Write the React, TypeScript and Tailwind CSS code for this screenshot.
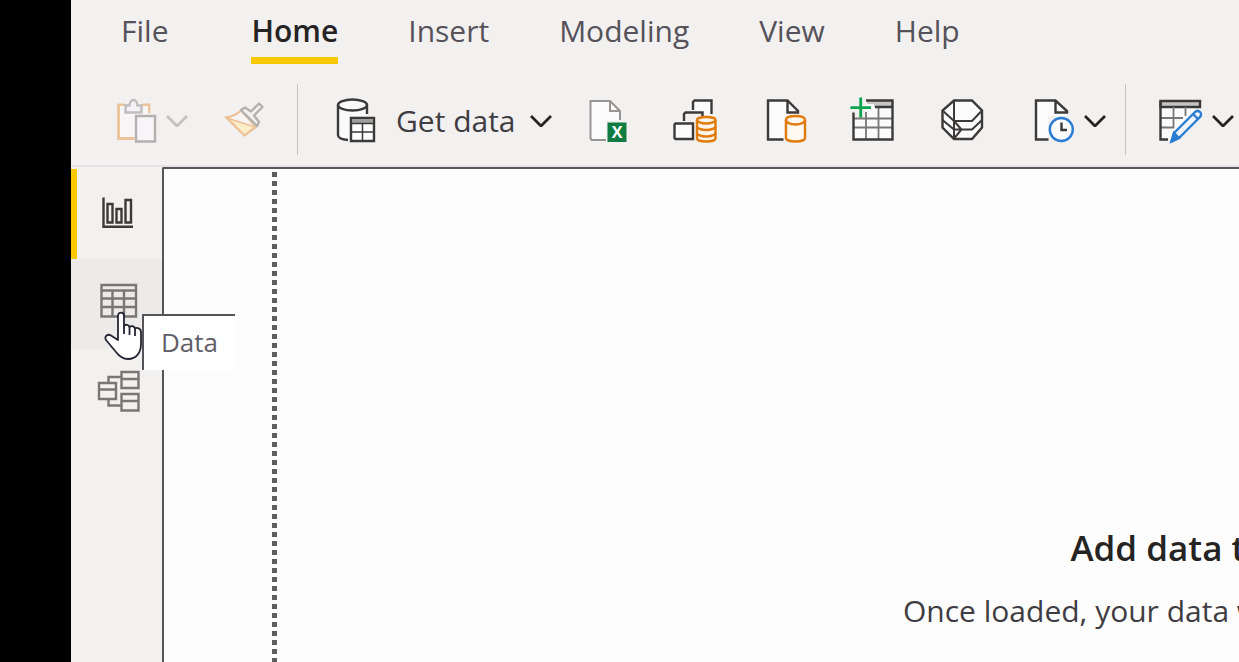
import type { ReactNode } from "react";
import clsx from "clsx";

const INK = "#3b3a39";
const ORANGE = "#e07b0c";
const BLUE = "#2b7cd3";

const tabs = ["File", "Home", "Insert", "Modeling", "View", "Help"];

function Icon({ children, color = INK }: { children: ReactNode; color?: string }) {
  return (
    <svg viewBox="0 0 48 48" fill="none" stroke={color} strokeWidth="2.4" className="size-12 shrink-0" aria-hidden="true">
      {children}
    </svg>
  );
}

function Chevron({ color = "#252423" }: { color?: string }) {
  return (
    <svg viewBox="0 0 22 14" fill="none" stroke={color} strokeWidth="2.8" className="h-[14px] w-[22px] shrink-0" aria-hidden="true">
      <path d="M1 3l10 10L21 3" />
    </svg>
  );
}

function Divider() {
  return <div className="h-[71px] w-px shrink-0 bg-[#c8c6c4]" />;
}

function PasteIcon() {
  return (
    <Icon color="#b3b0b0">
      <path d="M9 9H2.500v33.500h16M26 9h7v8" stroke="#edc39a" strokeWidth="2.800" />
      <path d="M4 10h28v9H19v22H4z" fill="#f8f5f7" stroke="none" />
      <path d="M9.500 16.500V9.500h4C14 5.500 15.500 4 17.500 4s3.500 1.500 4 5.500h4v7z" fill="#f5f2f5" stroke="#c0bdbe" />
      <path d="M20 20h19v25.500H20z" fill="#f8f5f8" />
    </Icon>
  );
}

function BrushIcon() {
  return (
    <Icon color="#b3b0b0">
      <path d="M4 21.500c6-1 11-3 15-7l15 16.500-11.500 8.500z" fill="#f8f4f4" stroke="#eec096" strokeWidth="2" />
      <path d="M5 22l28 9-10.500 8.500z" fill="#fdecc8" stroke="#eec096" strokeWidth="1.800" strokeLinejoin="round" />
      <path d="M19 14l4-2.500 6 4L37 7.500 40.500 11 32 19.500l5 6.500-2 4z" fill="#f5f2f2" strokeLinejoin="round" />
    </Icon>
  );
}

function GetDataIcon() {
  return (
    <Icon>
      <path d="M2 9v30c0 3 4 5 11 5.500V20h19V9" fill="#faf9fb" stroke="none" />
      <ellipse cx="16.500" cy="9" rx="14.500" ry="5.500" fill="#faf9fb" />
      <path d="M2 9v30c0 2.500 4 4.500 10 5M31 9v9" />
      <path d="M15 22h23v23H15z" fill="#fff" />
      <path d="M16 23h21v4H16z" fill="#a19f9d" stroke="none" />
      <path d="M15 27.500h23M15 36h23M26.500 27v18" strokeWidth="1.500" />
    </Icon>
  );
}

function ExcelIcon() {
  return (
    <Icon color="#979593">
      <path d="M23 44H9l-1.500-1.500V5H27l10 10v10H23z" fill="#fcfbfc" stroke="none" />
      <path d="M23 44H9l-1.500-1.500V5H27l10 10v9M27 5v10h10" strokeWidth="2" />
      <path d="M24.500 26.500h19V46h-19z" fill="#107c41" stroke="none" />
      <text x="34" y="42" textAnchor="middle" fontSize="16" fontWeight="700" fill="#fff" stroke="none" fontFamily="Open Sans, sans-serif">X</text>
    </Icon>
  );
}

function DataflowIcon() {
  return (
    <Icon>
      <path d="M21 14V6l1.500-1.500h17V19h-9z" fill="#fcfbfc" stroke="none" />
      <path d="M21 14V6l1.500-1.500h17V18" />
      <path d="M12 25v-7l1.500-1.500h17V20" />
      <path d="M3.500 27.500H21V43H3.500L2.500 42V28.500z" fill="#fcfbfc" />
      <path d="M25 24v18.500c0 1.700 4 3 9.200 3s9.300-1.300 9.300-3V24c0-1.700-4-3-9.300-3S25 22.300 25 24z" fill="#fff5ea" stroke={ORANGE} />
      <path d="M25 24c0 1.700 4 3.500 9.200 3.500s9.300-1.800 9.300-3.500M25 30.500c0 1.700 4 3.500 9.200 3.500s9.300-1.800 9.300-3.500M25 37c0 1.700 4 3.500 9.200 3.500s9.300-1.800 9.300-3.500" stroke={ORANGE} />
    </Icon>
  );
}

function SqlIcon() {
  return (
    <Icon>
      <path d="M23 43.500H7V4.500h19l11 12V20H23z" fill="#fcfbfc" stroke="none" />
      <path d="M22.500 43.500H7V4.500h19.500L37 15v1.500H26.500v-12" />
      <path d="M25 24v18c0 2 4 3.500 9.500 3.500S44 44 44 42V24c0-2.500-4-4-9.500-4S25 21.500 25 24z" fill="#fff9f1" stroke={ORANGE} />
      <path d="M25 24c0 2.500 4 4.500 9.500 4.500S44 26.500 44 24" stroke={ORANGE} />
    </Icon>
  );
}

function EnterDataIcon() {
  return (
    <Icon>
      <path d="M16 4.500h26.500v39H3V22h13z" fill="#fcfbfc" stroke="none" />
      <path d="M17 5h25v6H24V8h-7z" fill="#c8c6c4" stroke="none" />
      <path d="M3.500 22.500H42M3.500 31.500H42M16 16v27M28.500 11v32" stroke="#797775" strokeWidth="1.800" />
      <path d="M16 4.500h26.500v39H3.500V16.500M25 11h17" />
      <path d="M10.700 1.500v20M.5 11.700h20.500" stroke="#10a34f" strokeWidth="2.800" />
    </Icon>
  );
}

function DataverseIcon() {
  return (
    <Icon>
      <path d="M15 4.500h18l10 10v17l-10 11.500H15L3.500 31.500v-17z" fill="#fcfbfc" />
      <path d="M15 4.500V43M3.500 14.500L15 25h18l10-10.500M3.500 24L15 33.500h18L43 24M15 25l7.500 8.500L15 42.500" strokeWidth="2" />
    </Icon>
  );
}

function RecentIcon() {
  return (
    <Icon>
      <path d="M20 43.500H8V4.500h19l12 12V20H20z" fill="#fcfbfc" stroke="none" />
      <path d="M20.500 43.500H8V4.500h19.500L39 15v1.500H27.500v-12" />
      <circle cx="33.300" cy="33.500" r="11.500" fill="#fcfbfc" stroke={BLUE} />
      <path d="M33.500 26.500V34H39" />
    </Icon>
  );
}

function TransformIcon() {
  return (
    <Icon>
      <path d="M2 4.500h40v8L12 43.500H2z" fill="#fcfbfc" stroke="none" />
      <path d="M2.500 5h39.500v6H2.500z" fill="#c8c6c4" />
      <path d="M3 22h22M3 31.500h13M15.500 11v21M27.500 11v9" stroke="#797775" strokeWidth="1.800" />
      <path d="M2.500 5v38.500H10" />
      <path d="M13.500 45.500l2.500-8.500 20.500-20.500c2-2 4-2 5.500-.5s1.500 3.500-.5 5.500L21 42z" fill="#eef5fc" stroke={BLUE} strokeLinejoin="round" />
      <path d="M13.500 45.500l2.500-8.500 5 5z" fill={BLUE} stroke={BLUE} />
      <path d="M35 18l5.500 5.500" stroke={BLUE} />
    </Icon>
  );
}

function ReportIcon() {
  return (
    <Icon>
      <path d="M8.500 7.500v29.300H38M12.500 14h5v18.500h-5zM21.500 19h5v13.500h-5zM30.500 10h5.500v22.500h-5.500z" />
    </Icon>
  );
}

function TableIcon() {
  return (
    <Icon color="#797775">
      <path d="M6.500 5h34.500v31.500H6.500zM6.500 10.500H41M6.500 18.500H41M6.500 27H41M17.500 10v26M29 10v26" />
    </Icon>
  );
}

function ModelIcon() {
  return (
    <Icon color="#797775">
      <path d="M26.500 2h17v16h-17zM26.500 9h17M26.500 24h17v16.500h-17zM26.500 31h17M4 13h17v16H4zM4 19.500h17M13.500 13V7h13M13.500 29v6.500h13" />
    </Icon>
  );
}

const sources = [
  { label: "Excel workbook", icon: ExcelIcon },
  { label: "Dataflows", icon: DataflowIcon },
  { label: "SQL Server", icon: SqlIcon },
  { label: "Enter data", icon: EnterDataIcon },
  { label: "Dataverse", icon: DataverseIcon },
];

const views = [
  { label: "Report", icon: ReportIcon },
  { label: "Data", icon: TableIcon },
  { label: "Model", icon: ModelIcon },
];

function HandCursor() {
  return (
    <svg viewBox="0 0 40 50" className="absolute left-[33px] top-[52px] z-20 h-[50px] w-10" aria-hidden="true">
      <path
        d="M14 29V5c0-4.500 6-4.500 6 0v10c1-2 5-1.500 5.500 1 1.500-1.500 5-1 5.500 1.500 2-1.500 6 0 6 3.500v12c0 9-5 15-13 15-6 0-9-3-12-7L2 29c-2-4 2-6.500 5-4.500z"
        fill="#fff"
        stroke="#252433"
        strokeWidth="1.800"
        strokeLinejoin="round"
      />
      <path d="M20 14v9M25.500 16v8M31 17.500V25" fill="none" stroke="#252433" strokeWidth="1.800" />
    </svg>
  );
}

export default function App() {
  return (
    <div className="flex h-screen overflow-hidden whitespace-nowrap bg-[#f3f0f0] font-['Open_Sans',sans-serif] text-[#3f3d42]">
      <div className="w-[71px] shrink-0 bg-black" />

      <div className="flex min-w-0 flex-1 flex-col">
        {/* Ribbon */}
        <header className="shrink-0 border-b-2 border-[#e6e3e4] pb-[10px]">
          <nav className="flex gap-[70px] pl-[50px] pt-[10px] text-[30px] leading-[42px]">
            {tabs.map((tab) => (
              <a
                key={tab}
                href="#"
                className={clsx(
                  "border-b-[7px] pb-[5px]",
                  tab === "Home" ? "border-[#f8c900] font-semibold text-[#252423]" : "border-transparent text-[#55525a]",
                  tab === "File" && "mr-[13px]"
                )}
              >
                {tab}
              </a>
            ))}
          </nav>

          <div className="mt-5 flex items-center">
            <button aria-label="Paste" className="ml-[45px] flex items-center gap-[2px]">
              <PasteIcon />
              <Chevron color="#c4c1c1" />
            </button>
            <button aria-label="Format painter" className="ml-[34px] mr-[27px]">
              <BrushIcon />
            </button>
            <Divider />
            <button className="ml-[38px] flex items-center gap-3 text-[30px] leading-[42px]">
              <GetDataIcon />
              <span className="pr-[2px] pt-[3px]">Get data</span>
              <Chevron />
            </button>
            <div className="ml-[31px] flex gap-[41px]">
              {sources.map(({ label, icon: SourceIcon }) => (
                <button key={label} aria-label={label}>
                  <SourceIcon />
                </button>
              ))}
              <button aria-label="Recent sources" className="flex items-center gap-2">
                <RecentIcon />
                <Chevron />
              </button>
            </div>
            <div className="ml-[19px]">
              <Divider />
            </div>
            <button aria-label="Transform data" className="ml-8 flex items-center gap-[6px]">
              <TransformIcon />
              <Chevron />
            </button>
          </div>
        </header>

        <div className="flex min-h-0 flex-1">
          {/* View switcher */}
          <nav className="w-[91px] shrink-0 pt-[2px]">
            {views.map(({ label, icon: ViewIcon }) => (
              <div key={label} className="relative">
                <button
                  aria-label={label}
                  className={clsx(
                    "flex h-[90px] w-full items-center justify-center border-l-[6px] pr-[2px]",
                    label === "Report" ? "border-[#f8c900]" : "border-transparent",
                    label === "Data" && "bg-[#edeaea]"
                  )}
                >
                  <ViewIcon />
                </button>
                {label === "Data" && (
                  <>
                    <HandCursor />
                    <div
                      role="tooltip"
                      className="absolute left-[71px] top-[55px] z-10 border-l-2 border-t-2 border-[#55545a] bg-white px-[17px] pb-[10px] pt-2 text-[26px] leading-9 text-[#605e66]"
                    >
                      Data
                    </div>
                  </>
                )}
              </div>
            ))}
          </nav>

          {/* Canvas */}
          <main className="flex min-w-0 flex-1 overflow-hidden rounded-tl-xs border-l-2 border-t-2 border-[#55545a] bg-[#fefdfe] pl-[108px]">
            <div className="mt-[3px] w-[5px] shrink-0 bg-[repeating-linear-gradient(to_bottom,#605e5c_0_5px,transparent_5px_9px)]" />
            <div className="ml-[626px] w-max shrink-0 pt-[353px] text-center">
              <h1 className="pr-[14px] text-[35px] font-semibold leading-[52px] text-[#252423]">Add data to your report</h1>
              <p className="mt-4 text-[30px] leading-[42px]">Once loaded, your data will appear in the Fields pane.</p>
            </div>
          </main>
        </div>
      </div>
    </div>
  );
}
